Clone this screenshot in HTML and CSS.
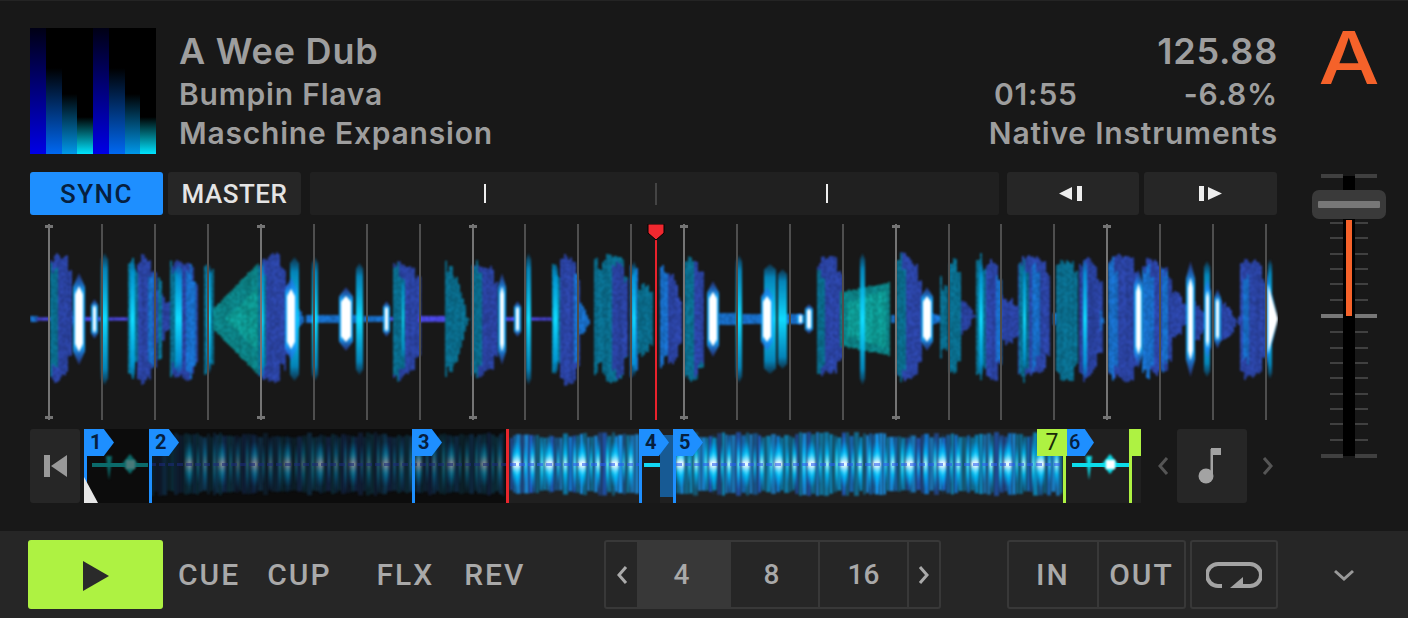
FILE: index.html
```html
<!DOCTYPE html>
<html lang="en">
<head>
    <meta charset="UTF-8">
    <title>Deck A</title>
    <link rel="stylesheet" href="styles.css">
</head>
<body>
    <div class="deck">
        <div class="main">
            <div class="info">
                <div class="cover">
                    <span class="bar bar-a"></span><span class="bar bar-b"></span><span class="bar bar-c"></span><span class="bar bar-d"></span>
                    <span class="bar bar-a"></span><span class="bar bar-b"></span><span class="bar bar-c"></span><span class="bar bar-d"></span>
                </div>
                <div class="track">
                    <div class="title">A Wee Dub</div>
                    <div class="line">Bumpin Flava</div>
                    <div class="line">Maschine Expansion</div>
                </div>
                <div class="meta">
                    <div class="title">125.88</div>
                    <div class="line time-row"><span class="time">01:55</span><span>-6.8%</span></div>
                    <div class="line">Native Instruments</div>
                </div>
            </div>

            <div class="controls">
                <button class="btn sync">SYNC</button>
                <button class="btn master">MASTER</button>
                <div class="phase">
                    <span class="phase-tick bright"></span>
                    <span class="phase-tick"></span>
                    <span class="phase-tick bright"></span>
                </div>
                <button class="btn nudge back">
                    <svg width="23" height="15" viewBox="0 0 23 15"><path d="M0 7.5 13 1v13z M18 0h5v15h-5z" fill="#eee"/></svg>
                </button>
                <button class="btn nudge">
                    <svg width="23" height="15" viewBox="0 0 23 15"><path d="M0 0h5v15H0z M9 1l14 6.5L9 14z" fill="#eee"/></svg>
                </button>
            </div>

            <div class="wave">
                <canvas id="waveCanvas" width="1248" height="196"></canvas>
                <svg class="playhead" width="18" height="196" viewBox="0 0 18 196">
                    <path d="M8 10h2v186H8z" fill="#e8222c"/>
                    <path d="M1 0h16v9l-8 7-8-7z" fill="#f0282f" stroke="#000" stroke-width="1"/>
                </svg>
            </div>

            <div class="strip">
                <button class="btn skip">
                    <svg width="23" height="24" viewBox="0 0 23 24"><path d="M0 1h6v22H0z M7 12 23 1v22z" fill="#999"/></svg>
                </button>
                <div class="overview">
                    <canvas id="overviewCanvas" width="1057" height="74"></canvas>
                    <span class="cue-line" style="left:0"></span>
                    <span class="cue-line" style="left:65px"></span>
                    <span class="cue-line" style="left:328px"></span>
                    <span class="cue-line" style="left:555px"></span>
                    <span class="cue-line" style="left:589px"></span>
                    <span class="cue-line green" style="left:979px"></span>
                    <span class="cue-line green" style="left:1045px"></span>
                    <span class="now"></span>
                    <span class="start-mark"></span>
                    <span class="flag" style="left:0">1</span>
                    <span class="flag" style="left:65px">2</span>
                    <span class="flag" style="left:328px">3</span>
                    <span class="flag" style="left:555px">4</span>
                    <span class="flag" style="left:589px">5</span>
                    <span class="flag tight" style="left:983px">6</span>
                    <span class="flag-green" style="left:953px">7</span>
                    <span class="flag-end" style="left:1045px"></span>
                </div>
                <svg class="chev" width="12" height="22" viewBox="0 0 12 22"><path d="M10 3 3 11l7 8" fill="none" stroke="#555" stroke-width="3"/></svg>
                <button class="btn note">
                    <svg width="30" height="36" viewBox="0 0 30 36"><circle cx="9" cy="28" r="7.5" fill="#a3a3a3"/><path d="M13.500 28V1h2.500v27z M14 0h10v7H14z" fill="#a3a3a3"/></svg>
                </button>
                <svg class="chev" width="12" height="22" viewBox="0 0 12 22"><path d="M2 3l7 8-7 8" fill="none" stroke="#555" stroke-width="3"/></svg>
            </div>
        </div>

        <div class="side">
            <div class="letter">A</div>
            <div class="fader">
                <div class="ticks">
                    <div class="row wide"><i></i><i></i></div>
                    <div class="row"><i></i><i></i></div>
                    <div class="row"><i></i><i></i></div>
                    <div class="row"><i></i><i></i></div>
                    <div class="row"><i></i><i></i></div>
                    <div class="row"><i></i><i></i></div>
                    <div class="row"><i></i><i></i></div>
                    <div class="row"><i></i><i></i></div>
                    <div class="row"><i></i><i></i></div>
                    <div class="row wide center"><i></i><i></i></div>
                    <div class="row"><i></i><i></i></div>
                    <div class="row"><i></i><i></i></div>
                    <div class="row"><i></i><i></i></div>
                    <div class="row"><i></i><i></i></div>
                    <div class="row"><i></i><i></i></div>
                    <div class="row"><i></i><i></i></div>
                    <div class="row"><i></i><i></i></div>
                    <div class="row"><i></i><i></i></div>
                    <div class="row wide"><i></i><i></i></div>
                </div>
                <div class="rail"></div>
                <div class="level"></div>
                <div class="handle"><span></span></div>
            </div>
        </div>
    </div>

    <div class="transport">
        <button class="play">
            <svg width="26" height="30" viewBox="0 0 26 30"><path d="M0 0 26 15 0 30z" fill="#2a2a2a"/></svg>
        </button>
        <div class="modes">
            <span class="mode cue">CUE</span>
            <span class="mode cup">CUP</span>
            <span class="mode flx">FLX</span>
            <span class="mode rev">REV</span>
        </div>
        <div class="group jump">
            <div class="cell arrow">
                <svg width="14" height="22" viewBox="0 0 14 22"><path d="M11 3 4 11l7 8" fill="none" stroke="#aaa" stroke-width="3"/></svg>
            </div>
            <div class="cell size active">4</div>
            <div class="cell size shifted">8</div>
            <div class="cell size">16</div>
            <div class="cell arrow last">
                <svg width="14" height="22" viewBox="0 0 14 22"><path d="M3 3l7 8-7 8" fill="none" stroke="#aaa" stroke-width="3"/></svg>
            </div>
        </div>
        <div class="group loop-io">
            <div class="cell io-in">IN</div>
            <div class="cell io-out">OUT</div>
        </div>
        <div class="group loop">
            <svg width="56" height="28" viewBox="0 0 56 28">
                <path d="M16 25H12A10 10 0 0 1 12 3H44A10 10 0 0 1 44 25H36" fill="none" stroke="#a3a3a3" stroke-width="4"/>
                <path d="M24 27 37 16v11z" fill="#a3a3a3"/>
            </svg>
        </div>
        <svg class="more" width="22" height="12" viewBox="0 0 22 12"><path d="M2 2l9 8 9-8" fill="none" stroke="#999" stroke-width="3"/></svg>
    </div>

    <script src="wave.js"></script>
</body>
</html>
```

FILE: styles.css
```css
* {
    box-sizing: border-box;
}

html, body {
    margin: 0;
    padding: 0;
}

body {
    width: 1408px;
    height: 618px;
    overflow: hidden;
    background-color: #181818;
    color: #9e9e9e;
    font-family: 'Inter', 'Liberation Sans', sans-serif;
}

button {
    border: none;
    padding: 0;
    font: inherit;
    color: inherit;
}

.deck {
    height: 531px;
    display: flex;
    padding: 28px 22px 0 30px;
    border-top: 1px solid #242424;
}

.main {
    width: 1248px;
    margin-top: -1px;
}

/* track info */
.info {
    height: 126px;
    display: flex;
    margin-bottom: 18px;
    white-space: nowrap;
}

.cover {
    width: 126px;
    height: 126px;
    display: flex;
    align-items: flex-end;
    background-color: #000;
}

.bar {
    flex: 1;
}

.bar-a {
    height: 100%;
    background: linear-gradient(#000014, #0000e6);
}

.bar-b {
    height: 68%;
    background: linear-gradient(#000, #0068f2);
}

.bar-c {
    height: 48%;
    background: linear-gradient(#000, #0098ea);
}

.bar-d {
    height: 29%;
    background: linear-gradient(#000, #00e4ff);
}

.track {
    margin-left: 23px;
    flex: 1;
}

.meta {
    width: 300px;
    text-align: right;
}

.title {
    font-size: 36px;
    font-weight: 600;
    line-height: 47px;
    letter-spacing: 0.8px;
}

.line {
    font-size: 30px;
    font-weight: 600;
    line-height: 39px;
    letter-spacing: 0.8px;
}

.time-row {
    display: flex;
    justify-content: space-between;
}

.time {
    margin-left: 16px;
}

/* sync row */
.controls {
    height: 43px;
    display: flex;
    margin-bottom: 9px;
}

.btn {
    background-color: #262626;
    border-radius: 3px;
    display: flex;
    align-items: center;
    justify-content: center;
    font-family: 'Roboto', sans-serif;
}

.sync {
    width: 133px;
    background-color: #1e8fff;
    color: #06203f;
    font-size: 26px;
    font-weight: 500;
    letter-spacing: 1.5px;
}

.master {
    width: 133px;
    margin-left: 5px;
    color: #e4e4e4;
    font-size: 26px;
    font-weight: 500;
    letter-spacing: 0.5px;
}

.phase {
    width: 689px;
    margin: 0 8px 0 9px;
    background-color: #202020;
    border-radius: 2px;
    display: flex;
    align-items: center;
    padding: 0 171px 0 174px;
    justify-content: space-between;
}

.phase-tick {
    width: 2px;
    height: 22px;
    background-color: #444;
}

.phase-tick.bright {
    height: 19px;
    background-color: #eee;
}

.nudge {
    width: 133px;
}

.back {
    width: 132px;
    margin-right: 5px;
    padding-right: 5px;
}

/* scrolling waveform */
.wave {
    position: relative;
    height: 196px;
    margin-bottom: 9px;
}

.wave canvas,
.overview canvas {
    display: block;
}

.playhead {
    position: absolute;
    left: 617px;
    top: 0;
}

/* overview strip */
.strip {
    height: 74px;
    display: flex;
    align-items: center;
}

.skip {
    width: 50px;
    height: 74px;
    margin-right: 4px;
}

.overview {
    position: relative;
    width: 1057px;
    height: 74px;
    margin-right: 16px;
}

.cue-line {
    position: absolute;
    top: 20px;
    width: 3px;
    height: 54px;
    background-color: #1e8fff;
}

.cue-line.green {
    background-color: #aef242;
}

.now {
    position: absolute;
    left: 422px;
    top: 0;
    width: 3px;
    height: 74px;
    background-color: #e8262c;
}

.start-mark {
    position: absolute;
    left: 0;
    bottom: 0;
    width: 14px;
    height: 26px;
    background-color: #e6e6e6;
    clip-path: polygon(0 0, 100% 100%, 0 100%);
}

.flag {
    position: absolute;
    top: 0;
    width: 30px;
    height: 27px;
    padding-left: 6px;
    background-color: #1e8fff;
    clip-path: polygon(0 0, 66% 0, 100% 50%, 66% 100%, 0 100%);
    color: #06203f;
    font-family: 'Roboto', sans-serif;
    font-size: 20px;
    font-weight: 700;
    line-height: 27px;
}

.flag.tight {
    padding-left: 2px;
    width: 27px;
    font-weight: 500;
}

.flag-green {
    position: absolute;
    top: 0;
    width: 30px;
    height: 27px;
    background-color: #aef242;
    color: #1a2a08;
    font-family: 'Roboto', sans-serif;
    font-size: 23px;
    line-height: 27px;
    text-align: center;
}

.flag-end {
    position: absolute;
    top: 0;
    width: 12px;
    height: 27px;
    background-color: #aef242;
}

.chev {
    flex: none;
}

.note {
    width: 70px;
    height: 74px;
    margin: 0 15px 0 8px;
}

/* channel fader */
.side {
    width: 74px;
    margin-left: 34px;
    margin-top: -1px;
}

.letter {
    height: 146px;
    color: #f5622a;
    font-size: 73px;
    font-weight: 500;
    line-height: 60px;
    text-align: center;
    transform: scaleX(1.18);
}

.fader {
    position: relative;
    height: 284px;
}

.ticks {
    height: 100%;
    display: flex;
    flex-direction: column;
    justify-content: space-between;
}

.row {
    display: flex;
    justify-content: center;
    gap: 12px;
    height: 2px;
}

.row i {
    width: 13px;
    background-color: #404040;
}

.row.wide {
    height: 4px;
}

.row.wide i {
    width: 22px;
}

.row.center i {
    background-color: #777;
}

.rail {
    position: absolute;
    left: 31px;
    top: 2px;
    width: 12px;
    height: 280px;
    background-color: #000;
}

.level {
    position: absolute;
    left: 34px;
    top: 46px;
    width: 6px;
    height: 96px;
    background-color: #f5622a;
}

.handle {
    position: absolute;
    left: 0;
    top: 16px;
    width: 74px;
    height: 29px;
    padding: 11px 6px 0;
    background-color: #3a3a3a;
    border-radius: 7px;
}

.handle span {
    display: block;
    height: 7px;
    background-color: #777;
    border-radius: 1px;
}

/* transport bar */
.transport {
    height: 87px;
    display: flex;
    align-items: center;
    padding: 0 0 0 28px;
    background-color: #262626;
    font-family: 'Roboto', sans-serif;
    font-size: 30px;
    font-weight: 500;
    color: #a9a9a9;
}

.play {
    width: 135px;
    height: 69px;
    display: flex;
    align-items: center;
    justify-content: center;
    padding-top: 2px;
    background-color: #aef242;
    border-radius: 3px;
    cursor: pointer;
}

.modes {
    display: flex;
    width: 441px;
    padding-left: 15px;
}

.mode {
    letter-spacing: 2px;
}

.cup {
    margin-left: 27px;
}

.flx {
    margin-left: 45px;
}

.rev {
    margin-left: 30px;
}

.group {
    height: 69px;
    display: flex;
    border: 2px solid #383838;
    border-radius: 3px;
}

.cell {
    display: flex;
    align-items: center;
    justify-content: center;
    letter-spacing: 2px;
}

.cell + .cell {
    border-left: 2px solid #383838;
}

.jump {
    width: 337px;
}

.arrow {
    width: 31px;
}

.arrow.last {
    flex: 1;
}

.size {
    width: 89px;
    font-size: 28px;
    letter-spacing: 0;
}

.shifted {
    padding-right: 6px;
}

.active {
    background-color: #383838;
    width: 92px;
    padding-right: 5px;
}

.loop-io {
    width: 179px;
    margin-left: 66px;
}

.io-in {
    width: 88px;
}

.io-out {
    flex: 1;
}

.loop {
    width: 88px;
    margin-left: 4px;
    align-items: center;
    justify-content: center;
}

.more {
    margin-left: 55px;
}
```

FILE: wave.js
```js
// Waveform data is read off by hand: [x0, x1, half height at x0, half height at x1, kind]
var blocks = [
    [30, 37, 3, 3, 'b'], [36, 38, 10, 10, 'i'], [38, 50, 1.5, 1.5, 'l'],
    [50, 72, 68, 62, 'i'], [50, 57, 66, 66, 't'], [69, 74, 22, 8, 'i'],
    [74, 84, 46, 46, 'w'], [84, 92, 2, 2, 'l'], [92, 97, 20, 20, 'w'],
    [97, 101, 2, 2, 'l'], [101, 108, 66, 66, 'c'], [108, 128, 1.5, 1.5, 'l'],
    [137, 156, 68, 62, 'i'], [128, 138, 64, 64, 't'], [148, 153, 64, 64, 'b'], [130, 135, 60, 60, 'c'],
    [153, 170, 30, 26, 'i'], [158, 161, 62, 62, 't'],
    [170, 198, 64, 60, 'i'], [170, 177, 66, 60, 't'], [175, 182, 55, 55, 'c'],
    [186, 196, 62, 60, 'b'], [204, 213, 64, 64, 't'], [207, 211, 55, 55, 'c'],
    [213, 258, 12, 58, 'T'], [226, 258, 2, 34, 'U'], [258, 285, 64, 68, 'i'], [258, 266, 64, 64, 't'], [261, 264, 60, 60, 'c'],
    [284, 290, 60, 40, 'i'], [290, 299, 62, 62, 'c'], [286, 296, 42, 42, 'w'], [296, 306, 12, 6, 'b'],
    [306, 340, 4, 4, 'b'], [312, 318, 62, 62, 'c'], [340, 352, 32, 32, 'w'], [352, 357, 4, 4, 'b'],
    [356, 363, 56, 56, 'c'], [363, 384, 3, 3, 'b'], [384, 389, 18, 18, 'w'], [389, 393, 2, 2, 'l'],
    [393, 420, 66, 62, 'i'], [393, 404, 64, 64, 't'], [402, 404, 40, 40, 'c'], [418, 445, 3, 3, 'l'],
    [445, 452, 68, 68, 't'], [452, 470, 55, 5, 't'], [472, 498, 66, 60, 'i'], [472, 482, 64, 62, 't'],
    [499, 505, 46, 46, 'w'], [505, 515, 2, 2, 'l'], [515, 520, 18, 18, 'w'], [526, 531, 66, 66, 'c'],
    [531, 552, 1.5, 1.5, 'l'], [560, 580, 68, 62, 'i'], [552, 560, 64, 64, 't'], [553, 558, 56, 56, 'c'],
    [574, 578, 66, 66, 'b'], [578, 590, 22, 4, 'b'], [594, 602, 68, 68, 't'], [602, 628, 66, 60, 't'],
    [612, 628, 62, 62, 'i'], [630, 637, 66, 66, 'b'], [632, 636, 58, 58, 'c'], [637, 653, 40, 36, 't'],
    [660, 668, 60, 60, 'b'], [668, 682, 52, 28, 'i'], [684, 703, 68, 62, 't'], [694, 703, 66, 62, 'i'],
    [708, 718, 38, 38, 'w'], [718, 736, 6, 6, 'b'], [736, 742, 64, 64, 'c'], [742, 764, 5, 5, 'b'],
    [764, 776, 55, 55, 'c'], [762, 772, 32, 32, 'w'], [778, 787, 50, 50, 'c'], [785, 800, 5, 5, 'b'],
    [798, 803, 6, 6, 'w'], [806, 812, 15, 15, 'w'], [817, 842, 64, 62, 'i'], [817, 825, 62, 62, 't'],
    [840, 890, 28, 38, 'T'], [848, 885, 18, 30, 'U'], [860, 865, 66, 66, 'c'], [891, 895, 4, 4, 'b'],
    [896, 922, 68, 62, 'i'], [896, 906, 66, 66, 't'], [922, 932, 32, 32, 'w'], [930, 940, 6, 3, 'b'],
    [940, 947, 50, 45, 't'], [949, 961, 66, 60, 't'], [961, 976, 25, 5, 'i'], [976, 986, 66, 66, 't'],
    [979, 983, 58, 58, 'c'], [986, 1002, 66, 60, 'i'], [996, 1001, 66, 60, 'b'], [1001, 1018, 30, 22, 'i'],
    [1018, 1050, 66, 60, 'i'], [1019, 1029, 64, 64, 't'], [1023, 1026, 52, 52, 'c'], [1032, 1040, 64, 60, 'b'],
    [1053, 1058, 6, 6, 'b'], [1056, 1078, 62, 62, 't'], [1083, 1087, 60, 60, 'c'], [1079, 1102, 64, 58, 'i'],
    [1100, 1106, 14, 5, 'b'], [1108, 1138, 68, 60, 'i'], [1108, 1118, 64, 64, 'b'], [1135, 1142, 50, 50, 'w'],
    [1142, 1172, 62, 56, 'i'], [1142, 1154, 62, 60, 'b'], [1162, 1168, 60, 62, 'b'], [1170, 1187, 30, 22, 'i'],
    [1187, 1194, 58, 58, 'w'], [1194, 1205, 25, 15, 'i'], [1204, 1210, 58, 50, 'c'], [1205, 1210, 40, 40, 'w'],
    [1215, 1220, 30, 30, 'w'], [1220, 1240, 28, 4, 'i'], [1240, 1267, 64, 58, 'i'], [1243, 1248, 60, 60, 'b'],
    [1268, 1272, 60, 60, 'c'], [1268, 1278, 50, 2, 'w']
];

var colors = {
    i: [42, 66, 160],
    b: [24, 108, 196],
    t: [10, 108, 140],
    T: [12, 126, 130],
    U: [14, 152, 146],
    l: [74, 70, 226]
};

var seed = 7;
function rnd() {
    seed = (seed * 16807) % 2147483647;
    return seed / 2147483647;
}

function drawBody(ctx, b, mid) {
    var c = colors[b[4]];
    var jagUp = 4;
    var jagDown = 4;
    var tall = b[2] > 8 && b[4] != 'T' && b[4] != 'U';
    for (var x = b[0]; x < b[1]; x += 2) {
        var t = (x - b[0]) / Math.max(1, b[1] - b[0]);
        var h = b[2] + (b[3] - b[2]) * t;
        if (tall) {
            // blocks rise fast and die away unevenly
            if (x < b[0] + 4) h *= 0.9;
            if (x > b[1] - 6) h *= 0.78;
            jagUp = Math.max(0, Math.min(12, jagUp + (rnd() - 0.5) * 7));
            jagDown = Math.max(0, Math.min(12, jagDown + (rnd() - 0.5) * 7));
        } else if (h > 8) {
            jagUp = jagDown = rnd() * 2;
        } else {
            jagUp = jagDown = 0;
        }
        var k = 0.94 + rnd() * 0.12;
        ctx.fillStyle = 'rgb(' + (c[0] * k | 0) + ',' + (c[1] * k | 0) + ',' + (c[2] * k | 0) + ')';
        ctx.fillRect(x, mid - h + jagUp, 2, h * 2 - jagUp - jagDown);
    }
}

function spindle(ctx, x0, x1, h, shoulder, mid) {
    var center = (x0 + x1) / 2;
    var half = (x1 - x0) / 2;
    ctx.beginPath();
    ctx.moveTo(center, mid - h);
    ctx.lineTo(center + half, mid - h * shoulder);
    ctx.lineTo(center + half, mid + h * shoulder);
    ctx.lineTo(center, mid + h);
    ctx.lineTo(center - half, mid + h * shoulder);
    ctx.lineTo(center - half, mid - h * shoulder);
    ctx.fill();
}

function drawGlow(ctx, b, mid) {
    var h = b[2];
    var g = ctx.createLinearGradient(0, mid - h, 0, mid + h);
    if (b[4] == 'w') {
        // blue halo first, then the hot core
        g.addColorStop(0, 'rgba(50,80,230,0.4)');
        g.addColorStop(0.2, 'rgba(20,170,255,0.95)');
        g.addColorStop(0.8, 'rgba(20,170,255,0.95)');
        g.addColorStop(1, 'rgba(50,80,230,0.4)');
        ctx.fillStyle = g;
        if (b[2] != b[3]) {
            ctx.beginPath();
            ctx.moveTo(b[0] - 2, mid - b[2]);
            ctx.lineTo(b[1], mid);
            ctx.lineTo(b[0] - 2, mid + b[2]);
            ctx.fill();
        } else {
            spindle(ctx, b[0] - 1, b[1] + 1, h, 0.7, mid);
        }
        ctx.fillStyle = '#fff';
        if (b[2] != b[3]) {
            ctx.beginPath();
            ctx.moveTo(b[0], mid - b[2] * 0.7);
            ctx.lineTo(b[1], mid);
            ctx.lineTo(b[0], mid + b[2] * 0.7);
            ctx.fill();
        } else {
            spindle(ctx, b[0] + 1, b[1] - 1, h * 0.72, 0.75, mid);
        }
    } else {
        g.addColorStop(0, 'rgba(0,120,190,0.3)');
        g.addColorStop(0.12, 'rgba(0,160,225,0.8)');
        g.addColorStop(0.5, '#10dcff');
        g.addColorStop(0.88, 'rgba(0,160,225,0.8)');
        g.addColorStop(1, 'rgba(0,120,190,0.3)');
        ctx.fillStyle = g;
        spindle(ctx, b[0], b[1], h, 0.9, mid);
    }
}

// speckles the dim bodies in 2px cells, leaves the bright streaks alone
function speckle(ctx, w, h) {
    var img = ctx.getImageData(0, 0, w, h);
    var d = img.data;
    for (var y = 0; y < h; y += 2) {
        for (var x = 0; x < w; x += 2) {
            var k = 0.86 + rnd() * 0.28;
            for (var n = 0; n < 4; n++) {
                var i = ((y + (n >> 1)) * w + x + (n & 1)) * 4;
                if (i + 3 < d.length) {
                    d[i] *= k;
                    d[i + 1] *= k;
                    d[i + 2] *= k;
                }
            }
        }
    }
    ctx.putImageData(img, 0, 0);
}

function newLayer(canvas) {
    var layer = document.createElement('canvas');
    layer.width = canvas.width;
    layer.height = canvas.height;
    return layer;
}

function drawMain() {
    var canvas = document.getElementById('waveCanvas');
    var ctx = canvas.getContext('2d');
    var mid = 95;
    var bodies = newLayer(canvas);
    var bctx = bodies.getContext('2d');
    var glows = newLayer(canvas);
    var gctx = glows.getContext('2d');
    bctx.translate(-30, 0);
    gctx.translate(-30, 0);
    blocks.forEach(function (b) {
        if (b[4] == 'c' || b[4] == 'w') {
            drawGlow(gctx, b, mid);
        } else {
            drawBody(bctx, b, mid);
        }
    });
    speckle(bctx, bodies.width, bodies.height);
    ctx.filter = 'blur(0.8px)';
    ctx.drawImage(bodies, 0, 0);
    ctx.filter = 'blur(1.3px)';
    ctx.drawImage(glows, 0, 0);
    ctx.filter = 'none';

    // beat grid
    ctx.translate(-30, 0);
    for (var n = 0; n < 24; n++) {
        var x = Math.round(48.3 + n * 52.9);
        var major = n % 4 == 0;
        ctx.fillStyle = major ? '#747474' : '#4e4e4e';
        ctx.fillRect(x, 0, 2, 196);
        if (major) {
            ctx.fillRect(x - 3, 1, 8, 3);
            ctx.fillRect(x - 3, 192, 8, 3);
        }
    }
    ctx.setTransform(1, 0, 0, 1, 0, 0);
}

function strike(ctx, x, w, h, mid, core) {
    var g = ctx.createLinearGradient(0, mid - h, 0, mid + h);
    g.addColorStop(0, 'rgba(0,150,255,0)');
    g.addColorStop(0.3, 'rgba(0,200,255,0.85)');
    g.addColorStop(0.5, core);
    g.addColorStop(0.7, 'rgba(0,200,255,0.85)');
    g.addColorStop(1, 'rgba(0,150,255,0)');
    ctx.fillStyle = g;
    ctx.fillRect(x, mid - h, w, h * 2);
}

// one stretch of the overview, drawn dimmed when it has already played
function drawStretch(ctx, x0, x1, mid, dim) {
    var base = dim ? 0.28 : 1;
    var tones = ['#1470c4', '#0d86b8', '#2058bc', '#1a90e6', '#0c78a4'];
    ctx.save();
    ctx.filter = 'blur(0.8px)';
    var x = x0;
    while (x < x1) {
        var w = 3 + (rnd() * 3 | 0);
        var h = 26 + rnd() * 6;
        ctx.fillStyle = tones[rnd() * tones.length | 0];
        ctx.globalAlpha = base * (0.5 + rnd() * 0.5);
        ctx.fillRect(x, mid - h, Math.min(w, x1 - x), h * 2);
        x += w;
    }
    ctx.globalAlpha = dim ? 0.32 : 1;
    ctx.filter = 'blur(1.2px)';
    for (var p = 189 - 84; p < 1060; p += 32.75) {
        if (p + 6 < x0 || p > x1) continue;
        strike(ctx, p - 4, 8, 22, mid, '#fff');
        strike(ctx, p - 1, 3, 31, mid, '#fff');
        if (p + 16 < x1) strike(ctx, p + 14, 4, 26, mid, '#bff');
        if (p + 26 < x1) strike(ctx, p + 24, 3, 28, mid, '#6ef');
        if (p + 9 < x1) strike(ctx, p + 8, 2, 20, mid, '#6ef');
    }
    ctx.filter = 'none';
    ctx.fillStyle = dim ? '#1b2a78' : '#2a5cf0';
    ctx.globalAlpha = 0.6;
    for (x = x0; x < x1; x += 9) {
        ctx.fillRect(x, mid - 1, 6, 3);
    }
    ctx.restore();
}

function sparse(ctx, x0, x1, mid, color, core) {
    ctx.fillStyle = color;
    ctx.fillRect(x0, mid - 1, x1 - x0, 4);
    ctx.filter = 'blur(1px)';
    ctx.beginPath();
    ctx.moveTo(x0 + 14, mid - 8);
    ctx.lineTo(x0 + 17, mid + 16);
    ctx.lineTo(x0 + 20, mid - 8);
    ctx.fill();
    ctx.beginPath();
    ctx.moveTo(x0 + 30, mid);
    ctx.lineTo(x0 + 38, mid - 10);
    ctx.lineTo(x0 + 46, mid);
    ctx.lineTo(x0 + 38, mid + 10);
    ctx.fill();
    ctx.fillStyle = core;
    ctx.fillRect(x0 + 34, mid - 4, 9, 9);
    ctx.filter = 'none';
}

function drawOverview() {
    var ctx = document.getElementById('overviewCanvas').getContext('2d');
    var mid = 35;
    ctx.fillStyle = '#0c0c0c';
    ctx.fillRect(0, 0, 423, 74);
    ctx.fillStyle = '#202020';
    ctx.fillRect(423, 0, 634, 74);
    sparse(ctx, 8, 64, mid, '#0b6a6a', '#4a7a7a');
    drawStretch(ctx, 66, 420, mid, true);
    drawStretch(ctx, 426, 555, mid, false);
    ctx.fillStyle = '#1a1a1a';
    ctx.fillRect(558, 0, 18, 74);
    ctx.fillStyle = '#175a94';
    ctx.fillRect(576, 6, 13, 62);
    ctx.fillStyle = '#12d8f4';
    ctx.fillRect(560, mid - 1, 16, 4);
    drawStretch(ctx, 592, 978, mid, false);
    sparse(ctx, 988, 1045, mid, '#0cdcea', '#fff');
}

drawMain();
drawOverview();
```
